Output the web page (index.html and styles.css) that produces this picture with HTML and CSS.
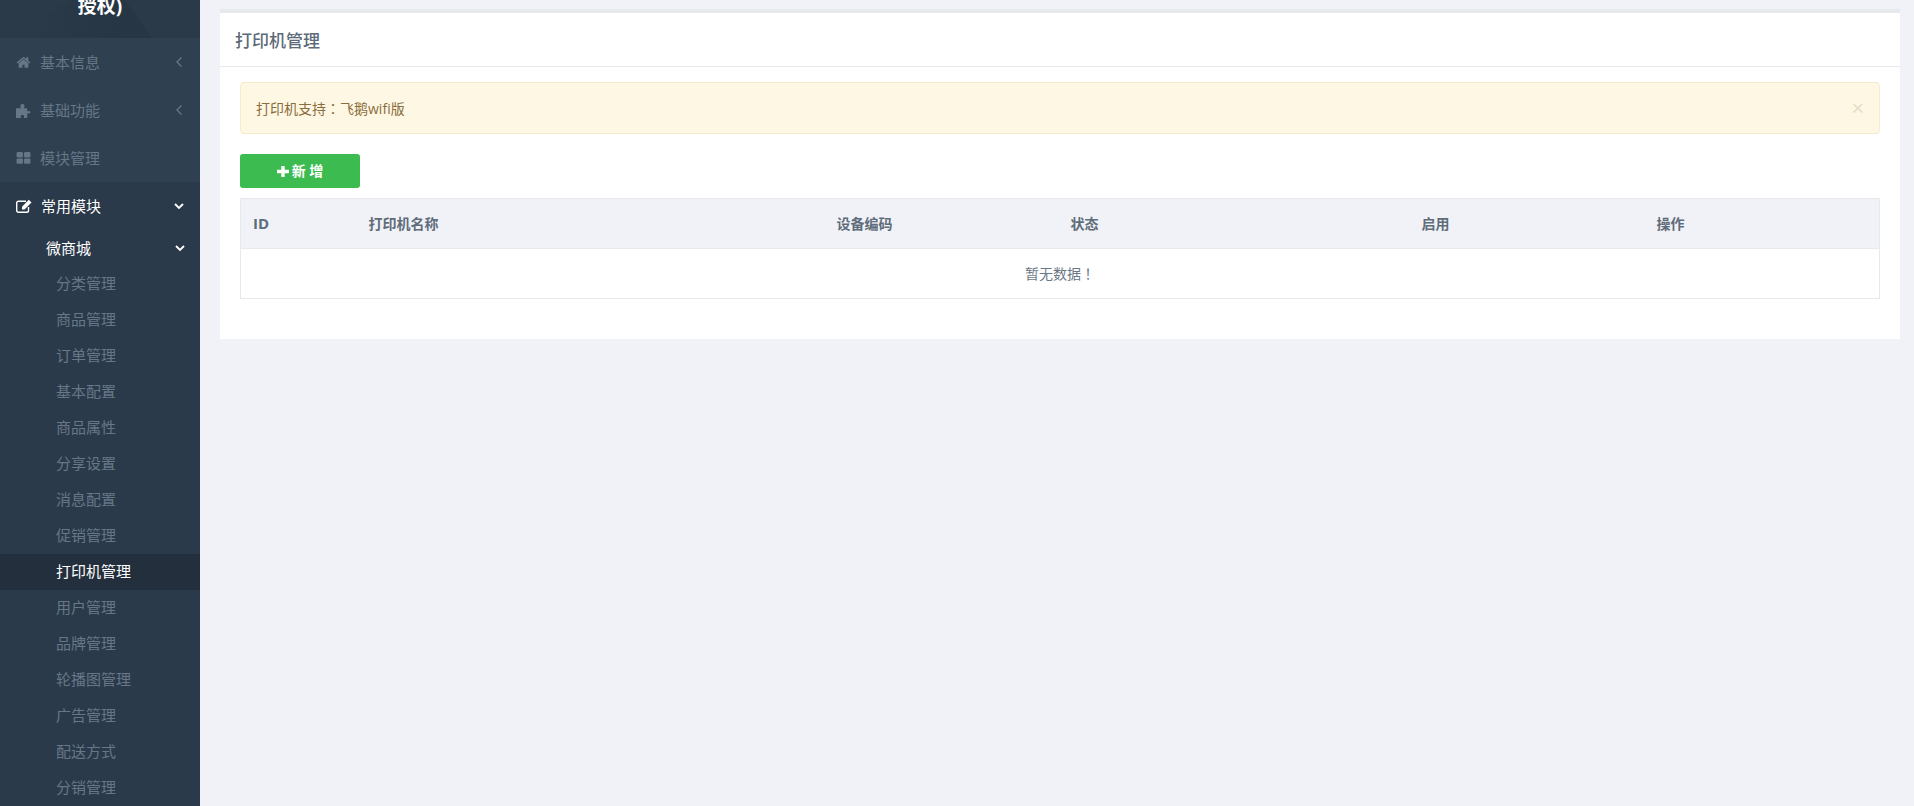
FILE: index.html
```html
<!DOCTYPE html>
<html lang="zh-CN">
<head>
<meta charset="utf-8">
<title>打印机管理</title>
<link rel="stylesheet" href="styles.css">
</head>
<body>
<div class="app">
  <aside class="sidebar">
    <div class="logo"><span class="logo-text">授权)</span></div>
    <nav class="nav-top">
      <div class="nav-item"><svg class="ico" viewBox="0 0 1792 1792"><path d="M1472 992v480q0 26-19 45t-45 19h-384v-384H768v384H384q-26 0-45-19t-19-45V992q0-1 .5-3t.5-3l575-474 575 474q1 2 1 6zm223-69l-62 74q-8 9-21 11h-3q-13 0-21-7L896 424l-692 577q-12 8-24 7-13-2-21-11l-62-74q-8-10-7-23.500t11-21.500l719-599q32-26 76-26t76 26l244 204V288q0-14 9-23t23-9h192q14 0 23 9t9 23v408l219 182q10 8 11 21.500t-7 23.500z"/></svg><span class="nav-label">基本信息</span><svg class="arrow" viewBox="0 0 8 12"><path d="M6.500 1.500 2 6l4.500 4.500"/></svg></div>
      <div class="nav-item"><svg class="ico" viewBox="0 0 14 14"><path d="M0 5h4c.5 0 .7-.4.4-.8C4 3.500 3.900 2.700 4.300 1.900 4.700 1.200 5.300 1 6 1s1.400.2 1.800.9c.3.8.2 1.600-.3 2.300-.3.400-.2.800.3.800H10.500v2.500c0 .4.400.5.800.3.500-.4 1-.4 1.400-.1.500.3.800.6.800 1s-.3.700-.8 1c-.4.300-.9.300-1.400-.1-.4-.2-.8-.1-.8.300V14H7.600c-.4 0-.5-.4-.3-.8.4-.5.400-1 .1-1.400C7.100 11.300 6.700 11.200 6 11.200s-1.100.1-1.400.6c-.3.4-.3.900.1 1.400.2.400.1.800-.3.800H0z"/></svg><span class="nav-label">基础功能</span><svg class="arrow" viewBox="0 0 8 12"><path d="M6.500 1.500 2 6l4.500 4.500"/></svg></div>
      <div class="nav-item"><svg class="ico" viewBox="0 0 1792 1792"><path d="M832 1024v384q0 52-38 90t-90 38H192q-52 0-90-38t-38-90v-384q0-52 38-90t90-38h512q52 0 90 38t38 90zm0-768v384q0 52-38 90t-90 38H192q-52 0-90-38t-38-90V256q0-52 38-90t90-38h512q52 0 90 38t38 90zm896 768v384q0 52-38 90t-90 38h-512q-52 0-90-38t-38-90v-384q0-52 38-90t90-38h512q52 0 90 38t38 90zm0-768v384q0 52-38 90t-90 38h-512q-52 0-90-38t-38-90V256q0-52 38-90t90-38h512q52 0 90 38t38 90z"/></svg><span class="nav-label">模块管理</span></div>
    </nav>
    <nav class="nav-active">
      <div class="nav-item open"><svg class="ico edit" viewBox="0 0 16 14"><path class="edit-box" d="M12.500 8v3.500a1.800 1.800 0 0 1-1.800 1.800H2.500a1.800 1.800 0 0 1-1.800-1.800V4a1.800 1.800 0 0 1 1.800-1.800h7.500"/><path class="edit-pen" d="M6 7.800 12.800.8l2.700 2.700-7 6.900H6z"/></svg><span class="nav-label">常用模块</span><svg class="arrow down" viewBox="0 0 12 8"><path d="M2 2l4 4 4-4"/></svg></div>
      <div class="sub-title"><span class="sub-label">微商城</span><svg class="arrow down" viewBox="0 0 12 8"><path d="M2 2l4 4 4-4"/></svg></div>
      <a class="sub-item">分类管理</a>
      <a class="sub-item">商品管理</a>
      <a class="sub-item">订单管理</a>
      <a class="sub-item">基本配置</a>
      <a class="sub-item">商品属性</a>
      <a class="sub-item">分享设置</a>
      <a class="sub-item">消息配置</a>
      <a class="sub-item">促销管理</a>
      <a class="sub-item current">打印机管理</a>
      <a class="sub-item">用户管理</a>
      <a class="sub-item">品牌管理</a>
      <a class="sub-item">轮播图管理</a>
      <a class="sub-item">广告管理</a>
      <a class="sub-item">配送方式</a>
      <a class="sub-item">分销管理</a>
    </nav>
  </aside>
  <main class="content">
    <section class="card">
      <h5 class="card-title">打印机管理</h5>
      <div class="card-body">
        <div class="alert"><span>打印机支持<span class="punct" lang="zh-TW">：</span>飞鹅wifi版</span><span class="alert-close">×</span></div>
        <button class="btn-add"><svg class="plus" viewBox="0 0 12 11"><path d="M4.300 0h3.400v3.800H12v3.400H7.700V11H4.300V7.200H0V3.800h4.300z"/></svg><span class="btn-label">新 增</span></button>
        <table class="table">
          <thead>
            <tr><th class="c1 latin">ID</th><th class="c2">打印机名称</th><th class="c3">设备编码</th><th class="c4">状态</th><th class="c5">启用</th><th class="c6">操作</th></tr>
          </thead>
          <tbody>
            <tr><td colspan="6" class="empty">暂无数据<span class="punct" lang="zh-TW">！</span></td></tr>
          </tbody>
        </table>
      </div>
    </section>
  </main>
</div>
</body>
</html>
```
FILE: styles.css
```css
* { box-sizing: border-box; }
html, body { margin: 0; height: 100%; overflow: hidden; }
body {
  background: #f0f2f7;
  color: #676a6c;
  font-family: "Open Sans", "Noto Sans CJK SC", sans-serif;
  font-size: 13px;
}
.app { display: flex; height: 806px; }
.sidebar {
  width: 200px;
  flex: none;
  background: #2b3a4a;
  overflow: hidden;
}
.logo {
  height: 38px;
  background: #2a3a49;
  display: flex;
  justify-content: center;
  align-items: flex-end;
  overflow: hidden;
  position: relative;
}
.logo::after {
  content: "";
  position: absolute;
  inset: 0;
  background: linear-gradient(90deg, #2a3a49 10%, #273645 60%);
  clip-path: polygon(12px 38px, 152px 38px, 125px 0, 70px 0);
}
.logo-text {
  position: relative;
  z-index: 1;
  color: #fff;
  font-size: 19px;
  font-weight: 700;
  line-height: 24px;
  margin-bottom: 20px;
}
.nav-top { background: #2f4050; }
.nav-item {
  height: 48px;
  display: flex;
  align-items: center;
  padding: 0 15px 0 16px;
  color: #667787;
  font-size: 15px;
}
.ico { width: 15px; height: 15px; fill: currentColor; flex: none; }
.nav-label { margin: 0 0 2px 9px; flex: 1; }
.arrow {
  width: 8px;
  height: 12px;
  fill: none;
  stroke: currentColor;
  stroke-width: 1.300;
  flex: none;
  margin-right: 2px;
}
.arrow.down { width: 12px; height: 8px; stroke-width: 1.800; margin-right: 0; stroke: #fff; }
.nav-active { background: #2b3a4a; }
.nav-item.open { color: #fff; }
.nav-item.open .nav-label { margin-left: 9px; }
.edit { width: 16px; height: 14px; }
.edit-box { fill: none; stroke: #fff; stroke-width: 1.400; }
.edit-pen { fill: #fff; }
.sub-title {
  height: 36px;
  display: flex;
  justify-content: space-between;
  align-items: center;
  padding: 0 14px 0 46px;
  color: #fff;
  font-size: 15px;
}
.sub-label { margin-bottom: 2px; }
.sub-item {
  display: block;
  height: 36px;
  line-height: 34px;
  padding-left: 56px;
  color: #667787;
  font-size: 15px;
}
.sub-item.current { background: #232f3c; color: #fff; }
.content { flex: 1; padding: 9px 14px 0 20px; min-width: 0; }
.card {
  background: #fff;
  border-top: 4px solid #e7eaec;
  height: 330px;
}
.card-title {
  margin: 0;
  height: 54px;
  padding: 1px 15px 0;
  line-height: 54px;
  border-bottom: 1px solid #e7eaec;
  font-size: 17px;
  font-weight: 500;
  color: #5d6a78;
  overflow: hidden;
}
.card-body { padding: 15px 20px 0; }
.alert {
  height: 52px;
  display: flex;
  justify-content: space-between;
  align-items: center;
  padding: 0 15px;
  background: #fdf7e4;
  border: 1px solid #f7ebc9;
  border-radius: 4px;
  color: #8a6d3b;
  font-size: 14px;
}
.punct { font-family: "Noto Sans CJK TC", sans-serif; }
.alert-close { font-size: 22px; color: #e4dfc4; line-height: 1; margin-top: -3px; }
.btn-add {
  display: flex;
  align-items: center;
  justify-content: center;
  width: 120px;
  height: 34px;
  margin: 20px 0 10px;
  background: #3cbb50;
  border: 0;
  border-radius: 3px;
  color: #fff;
  font-family: inherit;
  font-size: 14px;
  font-weight: 600;
  padding: 0;
}
.btn-label { margin-bottom: 2px; }
.plus { width: 12px; height: 11px; fill: #fff; margin-right: 3px; }
.table {
  width: 1640px;
  border-collapse: collapse;
  table-layout: fixed;
  border: 1px solid #e7eaec;
}
.table th {
  height: 50px;
  background: #f0f2f7;
  border-bottom: 1px solid #e7eaec;
  text-align: left;
  padding: 0 0 2px 12px;
  font-size: 14px;
  font-weight: 700;
  color: #5f6c7a;
}
.table th.latin { font-size: 15px; }
.c1 { width: 116px; }
.c2 { width: 468px; }
.c3 { width: 234px; }
.c4 { width: 351px; }
.c5 { width: 235px; }
.table .empty {
  height: 50px;
  text-align: center;
  font-size: 14px;
  color: #6b7885;
  padding: 0 0 2px;
}
```
